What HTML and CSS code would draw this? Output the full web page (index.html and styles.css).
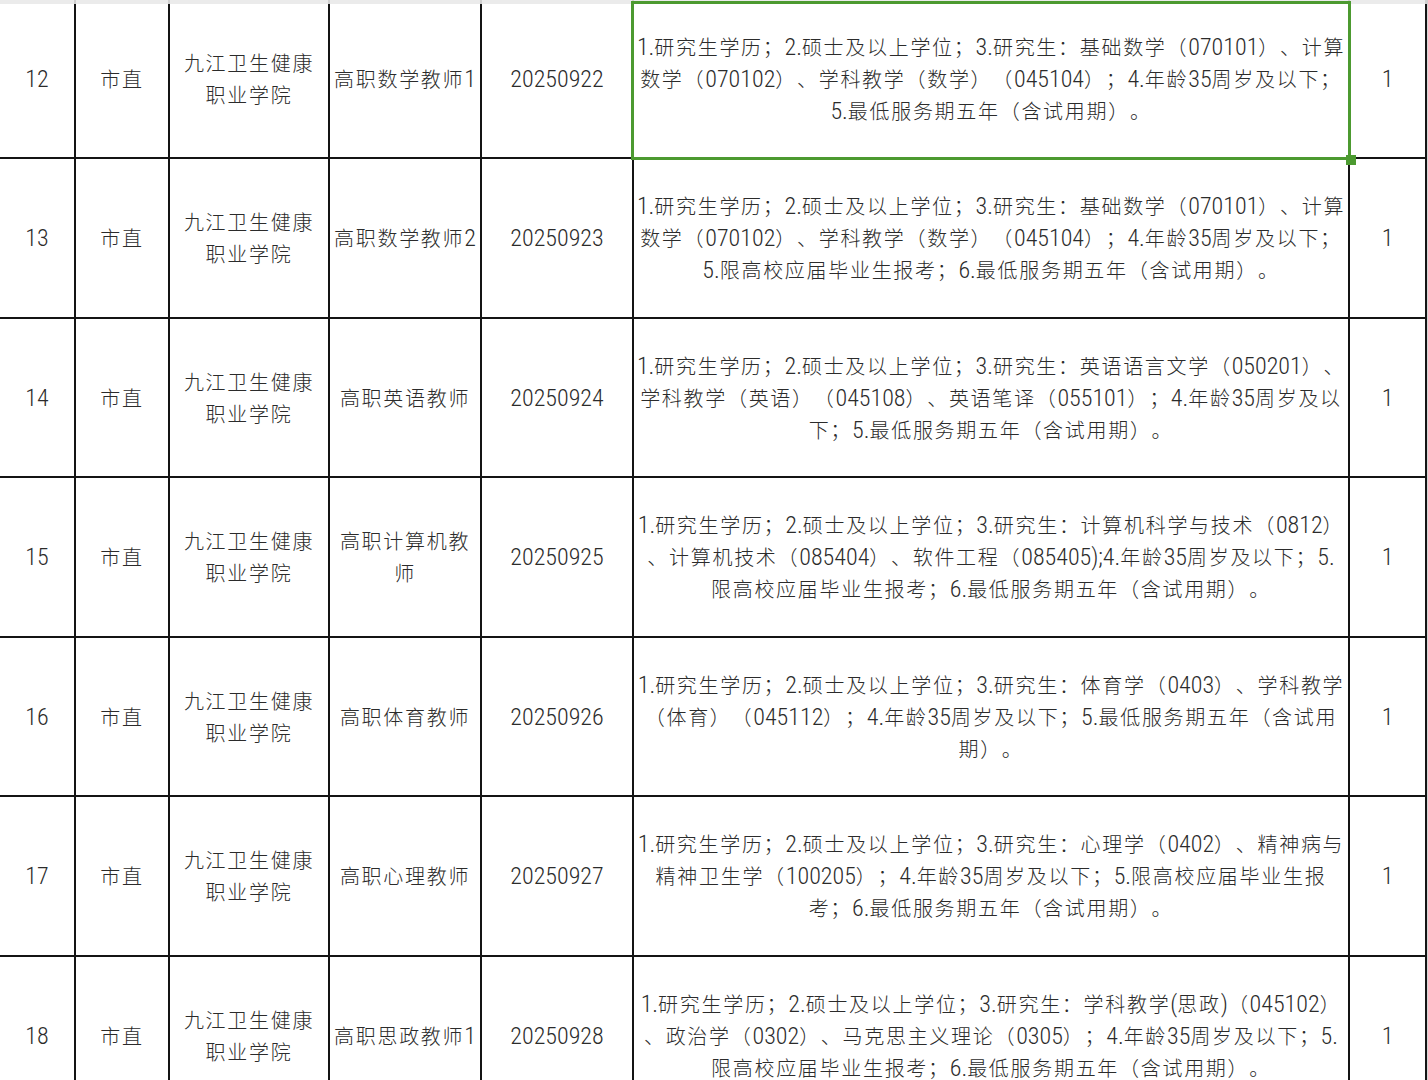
FILE: index.html
```html
<!DOCTYPE html>
<html lang="zh-CN">
<head>
<meta charset="utf-8">
<title>岗位表</title>
<link rel="stylesheet" href="styles.css">
</head>
<body>
<div class="sheet">
  <div class="strip">
    <div></div><div></div><div></div><div></div><div></div><div></div><div></div>
  </div>
  <div class="grid">
    <div class="cell r1"><span class="n">12</span></div>
    <div class="cell r1">市直</div>
    <div class="cell r1">九江卫生健康<br>职业学院</div>
    <div class="cell r1 job">高职数学教师<span class="n">1</span></div>
    <div class="cell r1"><span class="n">20250922</span></div>
    <div class="cell r1 desc selected"><p><span class="n">1.</span>研究生学历；<span class="n">2.</span>硕士及以上学位；<span class="n">3.</span>研究生：基础数学（<span class="n">070101</span>）、计算<br>数学（<span class="n">070102</span>）、学科教学（数学）（<span class="n">045104</span>）；<span class="n">4.</span>年龄<span class="n">35</span>周岁及以下；<br><span class="n">5.</span>最低服务期五年（含试用期）。</p><span class="sel-box"></span><span class="sel-handle"></span></div>
    <div class="cell r1"><span class="n">1</span></div>

    <div class="cell r2"><span class="n">13</span></div>
    <div class="cell r2">市直</div>
    <div class="cell r2">九江卫生健康<br>职业学院</div>
    <div class="cell r2 job">高职数学教师<span class="n">2</span></div>
    <div class="cell r2"><span class="n">20250923</span></div>
    <div class="cell r2 desc"><p><span class="n">1.</span>研究生学历；<span class="n">2.</span>硕士及以上学位；<span class="n">3.</span>研究生：基础数学（<span class="n">070101</span>）、计算<br>数学（<span class="n">070102</span>）、学科教学（数学）（<span class="n">045104</span>）；<span class="n">4.</span>年龄<span class="n">35</span>周岁及以下；<br><span class="n">5.</span>限高校应届毕业生报考；<span class="n">6.</span>最低服务期五年（含试用期）。</p></div>
    <div class="cell r2"><span class="n">1</span></div>

    <div class="cell r3"><span class="n">14</span></div>
    <div class="cell r3">市直</div>
    <div class="cell r3">九江卫生健康<br>职业学院</div>
    <div class="cell r3 job">高职英语教师</div>
    <div class="cell r3"><span class="n">20250924</span></div>
    <div class="cell r3 desc"><p><span class="n">1.</span>研究生学历；<span class="n">2.</span>硕士及以上学位；<span class="n">3.</span>研究生：英语语言文学（<span class="n">050201</span>）、<br>学科教学（英语）（<span class="n">045108</span>）、英语笔译（<span class="n">055101</span>）；<span class="n">4.</span>年龄<span class="n">35</span>周岁及以<br>下；<span class="n">5.</span>最低服务期五年（含试用期）。</p></div>
    <div class="cell r3"><span class="n">1</span></div>

    <div class="cell r2"><span class="n">15</span></div>
    <div class="cell r2">市直</div>
    <div class="cell r2">九江卫生健康<br>职业学院</div>
    <div class="cell r2 job">高职计算机教<br>师</div>
    <div class="cell r2"><span class="n">20250925</span></div>
    <div class="cell r2 desc"><p><span class="n">1.</span>研究生学历；<span class="n">2.</span>硕士及以上学位；<span class="n">3.</span>研究生：计算机科学与技术（<span class="n">0812</span>）<br>、计算机技术（<span class="n">085404</span>）、软件工程（<span class="n">085405);</span><span class="n">4.</span>年龄<span class="n">35</span>周岁及以下；<span class="n">5.</span><br>限高校应届毕业生报考；<span class="n">6.</span>最低服务期五年（含试用期）。</p></div>
    <div class="cell r2"><span class="n">1</span></div>

    <div class="cell r3"><span class="n">16</span></div>
    <div class="cell r3">市直</div>
    <div class="cell r3">九江卫生健康<br>职业学院</div>
    <div class="cell r3 job">高职体育教师</div>
    <div class="cell r3"><span class="n">20250926</span></div>
    <div class="cell r3 desc"><p><span class="n">1.</span>研究生学历；<span class="n">2.</span>硕士及以上学位；<span class="n">3.</span>研究生：体育学（<span class="n">0403</span>）、学科教学<br>（体育）（<span class="n">045112</span>）；<span class="n">4.</span>年龄<span class="n">35</span>周岁及以下；<span class="n">5.</span>最低服务期五年（含试用<br>期）。</p></div>
    <div class="cell r3"><span class="n">1</span></div>

    <div class="cell r2"><span class="n">17</span></div>
    <div class="cell r2">市直</div>
    <div class="cell r2">九江卫生健康<br>职业学院</div>
    <div class="cell r2 job">高职心理教师</div>
    <div class="cell r2"><span class="n">20250927</span></div>
    <div class="cell r2 desc"><p><span class="n">1.</span>研究生学历；<span class="n">2.</span>硕士及以上学位；<span class="n">3.</span>研究生：心理学（<span class="n">0402</span>）、精神病与<br>精神卫生学（<span class="n">100205</span>）；<span class="n">4.</span>年龄<span class="n">35</span>周岁及以下；<span class="n">5.</span>限高校应届毕业生报<br>考；<span class="n">6.</span>最低服务期五年（含试用期）。</p></div>
    <div class="cell r2"><span class="n">1</span></div>

    <div class="cell r3"><span class="n">18</span></div>
    <div class="cell r3">市直</div>
    <div class="cell r3">九江卫生健康<br>职业学院</div>
    <div class="cell r3 job">高职思政教师<span class="n">1</span></div>
    <div class="cell r3"><span class="n">20250928</span></div>
    <div class="cell r3 desc"><p><span class="n">1.</span>研究生学历；<span class="n">2.</span>硕士及以上学位；<span class="n">3.</span>研究生：学科教学<span class="n">(</span>思政<span class="n">)</span>（<span class="n">045102</span>）<br>、政治学（<span class="n">0302</span>）、马克思主义理论（<span class="n">0305</span>）；<span class="n">4.</span>年龄<span class="n">35</span>周岁及以下；<span class="n">5.</span><br>限高校应届毕业生报考；<span class="n">6.</span>最低服务期五年（含试用期）。</p></div>
    <div class="cell r3"><span class="n">1</span></div>
  </div>
</div>
</body>
</html>
```

FILE: styles.css
```css
html, body {
  margin: 0;
  padding: 0;
  background: #ffffff;
}

.sheet {
  width: 1428px;
  height: 1080px;
  overflow: hidden;
  background: #ffffff;
}

.strip {
  display: grid;
  grid-template-columns: 74px 92px 158px 150px 150px 714px 75px 1px;
  column-gap: 2px;
  height: 4px;
  background: #cfcfcf;
}

.strip div {
  background: #ebebeb;
}

.grid {
  display: grid;
  grid-template-columns: 74px 92px 158px 150px 150px 714px 75px;
  grid-template-rows: 153px 158px 157px 158px 157px 158px 157px 160px;
  gap: 2px;
  background: #141414;
  width: 1427px;
  border-right: 1px solid #d6d6d6;
}

.cell {
  background: #ffffff;
  display: flex;
  align-items: center;
  justify-content: center;
  text-align: center;
  color: #2b2b2b;
  font-family: "Noto Sans CJK SC", "Noto Sans CJK JP", sans-serif;
  font-weight: 300;
  font-size: 20px;
  letter-spacing: 1.7px;
  line-height: 32px;
  position: relative;
  text-spacing-trim: space-all;
}

.cell.r1 {
  padding-bottom: 3px;
  box-sizing: border-box;
}

.n {
  font-family: "Roboto", sans-serif;
  font-stretch: 75%;
  font-weight: 300;
  font-size: 24px;
  letter-spacing: 0;
}

.desc p {
  margin: 0;
  white-space: nowrap;
}

.sel-box {
  position: absolute;
  z-index: 2;
  left: -3px;
  top: -3px;
  right: -3px;
  bottom: -3px;
  border: 3px solid #4c9a30;
  pointer-events: none;
}

.sel-handle {
  position: absolute;
  z-index: 3;
  right: -8px;
  bottom: -8px;
  width: 10px;
  height: 10px;
  background: #4c9a30;
}
```
